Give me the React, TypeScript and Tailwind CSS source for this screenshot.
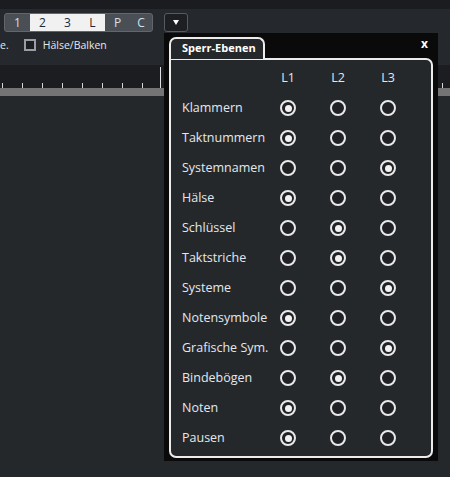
const rows: [string, number][] = [
  ['Klammern', 0],
  ['Taktnummern', 0],
  ['Systemnamen', 2],
  ['Hälse', 0],
  ['Schlüssel', 1],
  ['Taktstriche', 1],
  ['Systeme', 2],
  ['Notensymbole', 0],
  ['Grafische Sym.', 2],
  ['Bindebögen', 1],
  ['Noten', 0],
  ['Pausen', 0],
];

function Radio({ checked }: { checked: boolean }) {
  return (
    <div className="w-[16px] h-[16px] rounded-full border-2 border-[#e9e9e9] bg-[#1f2124] flex items-center justify-center">
      {checked && <div className="w-[7px] h-[7px] rounded-full bg-[#f2f2f2]" />}
    </div>
  );
}

function Ruler() {
  const ticks = Array.from({ length: 8 }, (_, i) => i);
  return (
    <div className="flex flex-col">
      <div className="h-[23px] bg-[#1c1d21] flex items-end relative">
        {ticks.map((i) => (
          <div key={i} className="w-[20px] h-[5px] shrink-0 flex">
            <div className="ml-[2px] w-px h-full bg-[#d8d8d8]" />
          </div>
        ))}
        <div className="w-px h-[21px] bg-[#e0e0e0]" />
        <div className="flex-1" />
        <div className="w-px h-[5px] bg-[#d8d8d8] mr-[7px]" />
      </div>
      <div className="h-[8px] bg-[#747474]" />
    </div>
  );
}

export default function App() {
  return (
    <div
      className="relative w-[450px] h-[477px] bg-[#25282b] overflow-hidden text-[#e3e8ee]"
      style={{ fontFamily: '"Open Sans", "DejaVu Sans", sans-serif' }}
    >
      <div className="h-[9px] bg-[#1b1c1f]" />
      <div className="h-[56px] bg-[#25282c]">
        <div className="flex items-center pt-[4px] pl-[4px]">
          <div className="flex h-[19px] w-[149px] rounded-[3px] border border-[#62676d] bg-[#4a4f55] overflow-hidden text-[12px] leading-none">
            <div className="w-[25px] flex items-center justify-center text-[#cfe0ee]">1</div>
            <div className="w-[75px] flex bg-[#f1f1f1] text-[#1d2838]">
              <div className="flex-1 flex items-center justify-center">2</div>
              <div className="flex-1 flex items-center justify-center">3</div>
              <div className="flex-1 flex items-center justify-center">L</div>
            </div>
            <div className="w-[25px] flex items-center justify-center text-[#d6e0ea]">P</div>
            <div className="flex-1 flex items-center justify-center text-[#d6e0ea]">C</div>
          </div>
          <div className="ml-[11px] w-[24px] h-[19px] rounded-[3px] border border-[#565b61] bg-[#1d1f22] flex items-center justify-center">
            <div className="w-0 h-0 border-l-[3.5px] border-r-[3.5px] border-t-[5px] border-l-transparent border-r-transparent border-t-white" />
          </div>
        </div>
        <div className="flex items-center mt-[7px] text-[10.5px] leading-none">
          <span>e.</span>
          <div className="ml-[15px] w-[12px] h-[12px] border-2 border-[#9a9ea3] bg-[#1c1e21]" />
          <span className="ml-[7px]">Hälse/Balken</span>
        </div>
      </div>
      <Ruler />

      <div className="absolute left-[164px] top-[33px] w-[274px] h-[428px] bg-[#0a0a0a] px-[5px] pt-[4px]">
        <div className="relative flex items-start h-[21px]">
          <div className="relative z-10 w-[96px] h-[22px] rounded-t-[7px] border-2 border-b-0 border-[#ececec] bg-[#25282b] pl-[11px] pt-[2px] text-[11px] font-bold text-white leading-[14px]">
            Sperr-Ebenen
          </div>
          <div className="flex-1" />
          <div className="mr-[5px] mt-[1px] text-[12px] font-bold text-white leading-none">x</div>
        </div>
        <div className="h-[400px] rounded-b-[7px] rounded-tr-[7px] border-2 border-[#ececec] bg-[#25282b] pt-[3px] pl-[11px] text-[12.5px]">
          <div className="flex items-center h-[30px]">
            <div className="w-[81px]" />
            {['L1', 'L2', 'L3'].map((l) => (
              <div key={l} className="w-[50px] text-center">{l}</div>
            ))}
          </div>
          {rows.map(([name, sel]) => (
            <div key={name} className="flex items-center h-[30px]">
              <div className="w-[81px] whitespace-nowrap">{name}</div>
              {[0, 1, 2].map((c) => (
                <div key={c} className="w-[50px] flex justify-center">
                  <Radio checked={c === sel} />
                </div>
              ))}
            </div>
          ))}
        </div>
      </div>
    </div>
  );
}
